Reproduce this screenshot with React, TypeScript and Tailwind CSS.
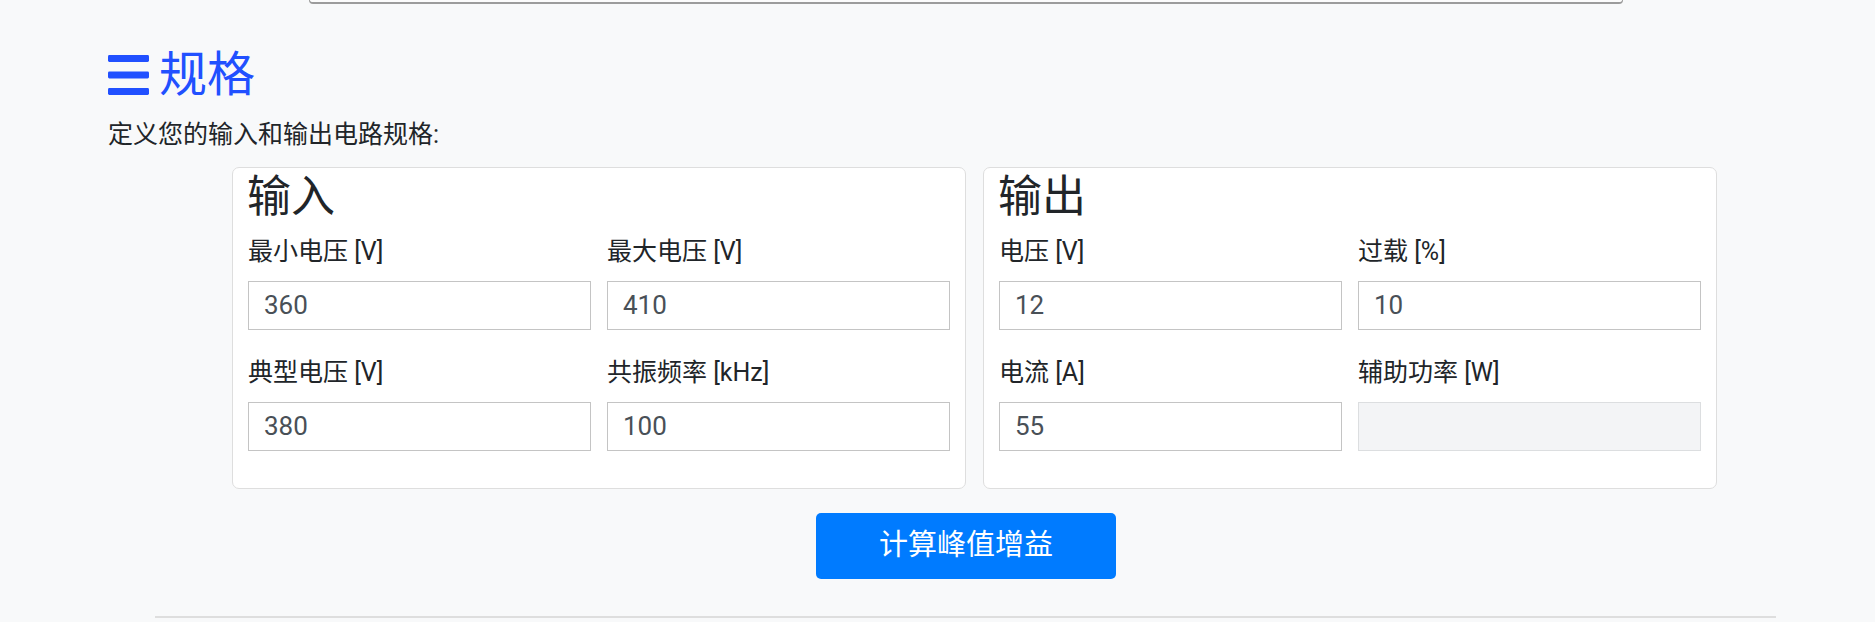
import React from "react";

const FONT = { fontFamily: 'Roboto, "Noto Sans CJK SC", sans-serif' };

function Field({ label, value, disabled }: { label: string; value?: string; disabled?: boolean }) {
  return (
    <div className="flex flex-col">
      <label className="text-[25px] leading-[36px] text-[#212529] mb-[11px]">{label}</label>
      {disabled ? (
        <div className="h-[49px] border border-[#dcdee0] bg-[#f3f4f6]" />
      ) : (
        <div className="h-[49px] border border-[#c4c4c4] bg-white flex items-center pl-[15px] text-[26px] text-[#495057]">
          {value}
        </div>
      )}
    </div>
  );
}

function Card({ title, fields }: { title: string; fields: { label: string; value?: string; disabled?: boolean }[] }) {
  return (
    <div className="w-[734px] border border-[#dedede] rounded-[7px] bg-white pt-[3px] px-[15px] pb-[37px]">
      <h3 className="text-[44px] leading-[52px] font-normal text-[#212529] m-0 -ml-[1px]">{title}</h3>
      <div className="grid grid-cols-2 gap-x-[16px] gap-y-[25px] mt-[11px]">
        {fields.map((f) => (
          <Field key={f.label} {...f} />
        ))}
      </div>
    </div>
  );
}

export default function App() {
  return (
    <div className="w-[1875px] h-[622px] overflow-hidden bg-[#f8f9fa]" style={FONT}>
      <div className="ml-[309px] w-[1314px] h-[4px] border-x border-b-2 border-[#9c9c9c] rounded-b-[8px] bg-[#fcfcfc]" />
      <div className="ml-[108px] mt-[42px] flex items-center h-[58px]">
        <svg width="41" height="40" viewBox="0 0 41 40" className="mr-[10px]">
          <rect x="0" y="0" width="41" height="7" rx="1.4" fill="#2150ff" />
          <rect x="0" y="16.5" width="41" height="7" rx="1.4" fill="#2150ff" />
          <rect x="0" y="33" width="41" height="7" rx="1.4" fill="#2150ff" />
        </svg>
        <h2 className="text-[48px] leading-[58px] font-normal text-[#2150ff] m-0">规格</h2>
      </div>
      <p className="ml-[108px] mt-[13px] text-[25px] leading-[36px] text-[#212529]">定义您的输入和输出电路规格:</p>
      <div className="ml-[232px] mt-[14px] flex gap-[17px]">
        <Card
          title="输入"
          fields={[
            { label: "最小电压 [V]", value: "360" },
            { label: "最大电压 [V]", value: "410" },
            { label: "典型电压 [V]", value: "380" },
            { label: "共振频率 [kHz]", value: "100" },
          ]}
        />
        <Card
          title="输出"
          fields={[
            { label: "电压 [V]", value: "12" },
            { label: "过载 [%]", value: "10" },
            { label: "电流 [A]", value: "55" },
            { label: "辅助功率 [W]", disabled: true },
          ]}
        />
      </div>
      <div className="ml-[816px] mt-[24px]">
        <button className="w-[300px] h-[66px] bg-[#007bff] rounded-[5px] text-white text-[29px] leading-none pb-[2px]">
          计算峰值增益
        </button>
      </div>
      <div className="ml-[155px] w-[1621px] mt-[37px] border-t-2 border-[#dedede]" />
    </div>
  );
}
